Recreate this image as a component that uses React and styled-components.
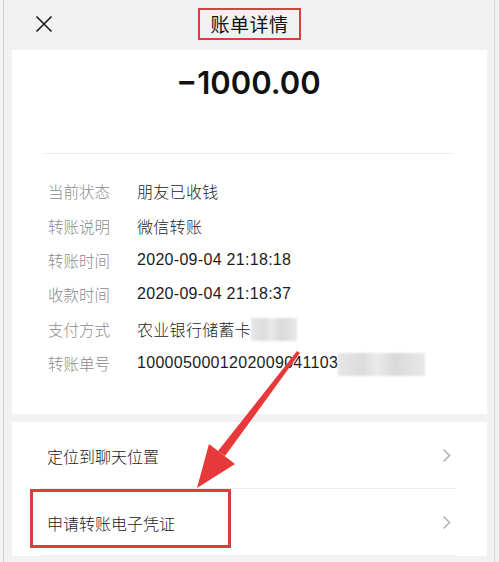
import React from 'react'
import styled, { createGlobalStyle } from 'styled-components'

const Global = createGlobalStyle`
  html, body { margin: 0; padding: 0; }
  body {
    font-family: "Noto Sans CJK SC", "Noto Sans", sans-serif;
    background: #f2f2f2;
    -webkit-font-smoothing: antialiased;
  }
`

const Window = styled.div`
  position: relative;
  display: flex;
  width: 499px;
  height: 562px;
  overflow: hidden;
  background: #f2f2f2;
`

const LeftEdge = styled.div`
  width: 3px;
  flex: none;
  background: #f4f4f4;
  border-right: 1px solid #d2d2d2;
`

const Scrollbar = styled.div`
  width: 4px;
  flex: none;
  background: #efefef;
  border-left: 1px solid #d9d9d9;
`

const Main = styled.div`
  flex: 1;
  display: flex;
  flex-direction: column;
  gap: 8px;
  padding: 0 7px 0 8px;
  min-width: 0;
`

const Header = styled.div`
  height: 50px;
  margin-bottom: -8px;
  display: grid;
  grid-template-columns: 1fr auto 1fr;
  align-items: center;
  background: #f1f1f1;
`

const Close = styled.button`
  justify-self: start;
  margin-left: 23px;
  margin-top: -2px;
  padding: 0;
  border: 0;
  background: none;
  display: flex;
`

const Title = styled.h1`
  margin: 0;
  margin-top: -2px;
  padding: 2px 10px 3px;
  border: 2px solid #d8403f;
  font-size: 19px;
  font-weight: 400;
  line-height: 23px;
  color: #111;
  letter-spacing: 0.5px;
`

const Card = styled.section`
  background: #fff;
  padding: ${p => p.$pad};
`

const Amount = styled.div`
  text-align: center;
  font-family: Inter, "Noto Sans", sans-serif;
  font-size: 31px;
  font-weight: 600;
  line-height: 36px;
  color: #111;
  padding: 15px 0 52px;
  margin-left: -4px;
  border-bottom: 1px solid #ececec;
`

const Details = styled.dl`
  margin: 0;
  padding: 20px 0 0;
`

const Row = styled.div`
  display: flex;
  align-items: center;
  height: 34.4px;
  font-size: 15.5px;
  font-weight: 300;
`

const Label = styled.dt`
  width: 89px;
  flex: none;
  color: #8a8a8a;
`

const Value = styled.dd`
  margin: 0;
  color: #1c1c1c;
  display: flex;
  align-items: center;
  white-space: nowrap;
  font-family: "Liberation Sans", "Noto Sans CJK SC", sans-serif;
  font-size: 16px;
  letter-spacing: 0.3px;
`

const Blur = styled.span`
  display: inline-block;
  width: ${p => p.$w}px;
  height: 23px;
  margin-top: 2px;
  background: linear-gradient(90deg, #e6e6e6 0%, #dcdcdc 30%, #ebebeb 45%, #d9d9d9 65%, #e8e8e8 100%);
  filter: blur(1.2px);
`

const ActionRow = styled.div`
  position: relative;
  display: flex;
  align-items: center;
  justify-content: space-between;
  height: 67px;
  padding: 0 36px 0 35px;
  font-size: 16px;
  font-weight: 300;
  color: #1a1a1a;
  &::after {
    content: "";
    position: absolute;
    left: 28px;
    right: 31px;
    bottom: 0;
    border-bottom: 1px solid #ededed;
  }
`

const Mark = styled.div`
  position: absolute;
  left: 18px;
  top: 0;
  width: 201px;
  height: 59px;
  box-sizing: border-box;
  border: 3px solid #d8403f;
  pointer-events: none;
`

const ArrowLayer = styled.svg`
  position: absolute;
  left: 0;
  top: 0;
  pointer-events: none;
`

function Chevron() {
  return (
    <svg width="9" height="15" viewBox="0 0 9 15">
      <polyline points="1.5,1.5 7.5,7.5 1.5,13.5" fill="none" stroke="#b5b5b5" strokeWidth="1.6" />
    </svg>
  )
}

const details = [
  ['当前状态', '朋友已收钱'],
  ['转账说明', '微信转账'],
  ['转账时间', '2020-09-04 21:18:18'],
  ['收款时间', '2020-09-04 21:18:37'],
  ['支付方式', '农业银行储蓄卡', 46],
  ['转账单号', '1000050001202009041103', 87],
]

export default function App() {
  return (
    <>
      <Global />
      <Window>
        <LeftEdge />
        <Main>
          <Header>
            <Close aria-label="关闭">
              <svg width="18" height="18" viewBox="0 0 18 18">
                <path d="M1.5 1.5 L16.5 16.5 M16.5 1.5 L1.5 16.5" stroke="#1a1a1a" strokeWidth="1.6" />
              </svg>
            </Close>
            <Title>账单详情</Title>
            <span />
          </Header>

          <Card $pad="0 34px 34px 36px">
            <Amount>−1000.00</Amount>
            <Details>
              {details.map(([k, v, blur]) => (
                <Row key={k}>
                  <Label>{k}</Label>
                  <Value>
                    {v}
                    {blur && <Blur $w={blur} />}
                  </Value>
                </Row>
              ))}
            </Details>
          </Card>

          <Card $pad="0">
            <ActionRow>
              <span>定位到聊天位置</span>
              <Chevron />
            </ActionRow>
            <ActionRow>
              <Mark />
              <span>申请转账电子凭证</span>
              <Chevron />
            </ActionRow>
          </Card>
        </Main>
        <Scrollbar />

        <ArrowLayer width="499" height="562" viewBox="0 0 499 562">
          <polygon points="297,351 300,353 225,456 218,451" fill="#e8393a" />
          <polygon points="197,488 209,444 235,464" fill="#e8393a" />
        </ArrowLayer>
      </Window>
    </>
  )
}
